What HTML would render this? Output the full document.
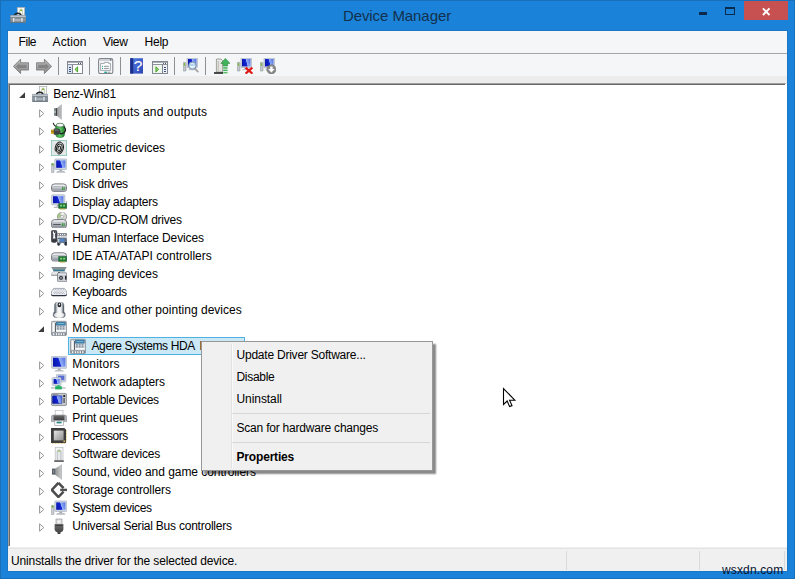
<!DOCTYPE html>
<html><head><meta charset="utf-8"><title>Device Manager</title>
<style>
html,body{margin:0;padding:0}
body{width:795px;height:579px;overflow:hidden;position:relative;background:#1a83d9;font-family:"Liberation Sans",sans-serif;font-size:12px;color:#000}
.abs{position:absolute}
.t{position:absolute;white-space:nowrap;line-height:14px;height:14px}
#frame{left:0;top:0;width:793px;height:577px;border:1px solid #1a70b8}
#title{left:0;top:6.7px;width:794px;text-align:center;font-size:15px;color:#14304c;line-height:18px;letter-spacing:-.07px}
#client{left:8px;top:31px;width:779px;height:540px;background:#f0f0f0}
#menubar{left:8px;top:31px;width:779px;height:22px;background:#f5f6f7}
#menuline{left:8px;top:53px;width:779px;height:1px;background:#a6a6a6}
#toolbar{left:8px;top:54px;width:779px;height:22px;background:#f5f6f7}
#gap{left:8px;top:76px;width:779px;height:7px;background:#ececec}
.tsep{position:absolute;top:57px;width:1px;height:18px;background:#8f8f8f}
#tree{left:8px;top:83px;width:775px;height:461px;background:#fff;border-left:1px solid #a0a0a0;border-top:1px solid #a0a0a0;border-right:2px solid #fff;border-bottom:1px solid #fff;box-shadow:inset 1px 1px 0 #696969;padding:1px 0 0 1px}
#sel{left:68px;top:337px;width:175px;height:16px;background:#cbe8f6;border:1px solid #4fb0e2}
#status{left:8px;top:548px;width:779px;height:23px;background:#f0f0f0;border-top:1px solid #e3e3e3;box-sizing:border-box}
.ssep{position:absolute;top:551px;width:1px;height:19px;background:#dadada}
#menu{left:201px;top:341px;width:230px;height:128px;border:1px solid #979797;background:#f0f0f0;box-shadow:3px 3px 1.6px rgba(0,0,0,.46)}
#gutter{left:231px;top:344px;width:1px;height:124px;background:#e2e2e2;border-right:1px solid #fafafa}
.sp{position:absolute;left:232px;width:198px;height:1px;background:#d7d7d7}
</style></head><body>

<svg width="0" height="0" style="position:absolute"><defs>
<linearGradient id="gScr" x1="0" y1=".25" x2="1" y2="0"><stop offset="0" stop-color="#0a18b0"/><stop offset=".42" stop-color="#1226d4"/><stop offset=".5" stop-color="#93aef4"/><stop offset="1" stop-color="#4a6ce4"/></linearGradient>
<linearGradient id="gGrayV" x1="0" y1="0" x2="0" y2="1"><stop offset="0" stop-color="#d9dde1"/><stop offset="1" stop-color="#8b939b"/></linearGradient>
<linearGradient id="gGrayH" x1="0" y1="0" x2="1" y2="0"><stop offset="0" stop-color="#929292"/><stop offset="1" stop-color="#cfcfcf"/></linearGradient>
<linearGradient id="gBox" x1="0" y1="0" x2="0" y2="1"><stop offset="0" stop-color="#aab3bb"/><stop offset="1" stop-color="#78838c"/></linearGradient>
<linearGradient id="gGreen" x1="0" y1="0" x2="1" y2="0"><stop offset="0" stop-color="#2f9a3a"/><stop offset=".5" stop-color="#5fd06a"/><stop offset="1" stop-color="#1f7a2a"/></linearGradient>
<linearGradient id="gDark" x1="0" y1="0" x2="0" y2="1"><stop offset="0" stop-color="#6a6a6a"/><stop offset="1" stop-color="#3c3c3c"/></linearGradient>
<linearGradient id="gChip" x1="0" y1="0" x2="1" y2="1"><stop offset="0" stop-color="#e6e6e6"/><stop offset="1" stop-color="#8e8e8e"/></linearGradient>
<linearGradient id="gMouse" x1="0" y1="0" x2="1" y2="0"><stop offset="0" stop-color="#6a727e"/><stop offset=".14" stop-color="#4e5662"/><stop offset=".36" stop-color="#e4e7ea"/><stop offset=".5" stop-color="#ffffff"/><stop offset=".68" stop-color="#dcdfe3"/><stop offset=".86" stop-color="#4e5662"/><stop offset="1" stop-color="#7a828e"/></linearGradient>
<linearGradient id="gLid" x1="0" y1="0" x2="0" y2="1"><stop offset="0" stop-color="#7f898c"/><stop offset=".45" stop-color="#8f9a9c"/><stop offset=".75" stop-color="#2f7f98"/><stop offset="1" stop-color="#1f5f78"/></linearGradient>
<linearGradient id="gArrow" x1="0" y1="0" x2="0" y2="1"><stop offset="0" stop-color="#b9b9b9"/><stop offset="1" stop-color="#8f8f8f"/></linearGradient>
<linearGradient id="gHelp" x1="0" y1="0" x2="1" y2="1"><stop offset="0" stop-color="#5580e4"/><stop offset="1" stop-color="#2a44b4"/></linearGradient>
</defs></svg>

<div id="frame" class="abs"></div><div class="abs" style="left:7px;top:30px;width:779px;height:540px;border:1px solid #1b76c6"></div>
<svg class="abs" style="left:10px;top:7px" width="16" height="16" viewBox="0 0 16 16" ><rect x="7.3" y=".4" width="7.4" height="8.6" fill="#fdfdfd" stroke="#a4aaae" stroke-width=".7"/><path d="M9.6 8.6 V3.6 Q9.6 2 11.1 2 Q12.6 2 12.6 3.6 V8.6" fill="#f1f4ea" stroke="#a9b49a" stroke-width=".6"/><path d="M9.9 3.9 Q9.9 2.3 11.1 2.3 Q12.3 2.3 12.3 3.9 Z" fill="#8fb33a"/><path d="M4.3 8.6 Q5 6.2 7.8 6.2 Q10.6 6.2 11.3 8.6" fill="none" stroke="#1f2326" stroke-width="1.4"/><rect x=".3" y="8.3" width="15.6" height="7.5" rx=".5" fill="url(#gBox)" stroke="#6c7781" stroke-width=".5"/><rect x=".6" y="8.7" width="15" height="1.7" fill="#bcc5cd"/><rect x=".6" y="10.5" width="15" height=".8" fill="#5a6670"/><rect x="2.9" y="11" width="1.5" height="4" fill="#dfe4e8"/><rect x="11.2" y="11" width="1.5" height="4" fill="#dfe4e8"/><rect x="5.2" y="12" width="5.4" height="2.4" fill="#a9b3bc"/><rect x=".6" y="14.8" width="15" height=".8" fill="#66717b"/></svg>
<div id="title" class="abs">Device Manager</div>
<div class="abs" style="left:699px;top:12px;width:8px;height:3px;background:#0c2a4a"></div>
<div class="abs" style="left:725px;top:7px;width:8px;height:5px;border:1px solid #0c2a4a;border-top-width:2px"></div>
<div class="abs" style="left:744px;top:1px;width:44px;height:19px;background:#c75050"></div>
<svg class="abs" style="left:760px;top:5px" width="12" height="12" viewBox="0 0 12 12" ><path d="M2.9 3.4 L9.5 10 M9.5 3.4 L2.9 10" stroke="#fff" stroke-width="1.9"/></svg>
<div id="client" class="abs"></div><div id="menubar" class="abs"></div><div id="menuline" class="abs"></div><div id="toolbar" class="abs"></div><div id="gap" class="abs"></div>
<div class="t" style="left:18.6px;top:35px;letter-spacing:-0.461px">File</div>
<div class="t" style="left:52.6px;top:35px;letter-spacing:0.107px">Action</div>
<div class="t" style="left:103px;top:35px;letter-spacing:-0.324px">View</div>
<div class="t" style="left:144.5px;top:35px;letter-spacing:-0.222px">Help</div>
<svg class="abs" style="left:13px;top:58px" width="16" height="16" viewBox="0 0 16 16" ><path d="M.4 8.4 L7.6 1.2 V4.8 H15.6 V12 H7.6 V15.6 Z" fill="url(#gArrow)" stroke="#7c7c7c" stroke-width=".9" stroke-linejoin="round"/><path d="M3 8.4 L6.4 5 V6.8 H13.6 V10 H6.4 V11.8 Z" fill="#6f6f6f" opacity=".6"/></svg>
<svg class="abs" style="left:36px;top:58px" width="16" height="16" viewBox="0 0 16 16" ><g transform="translate(16,0) scale(-1,1)"><path d="M.4 8.4 L7.6 1.2 V4.8 H15.6 V12 H7.6 V15.6 Z" fill="url(#gArrow)" stroke="#7c7c7c" stroke-width=".9" stroke-linejoin="round"/><path d="M3 8.4 L6.4 5 V6.8 H13.6 V10 H6.4 V11.8 Z" fill="#6f6f6f" opacity=".6"/></g></svg>
<svg class="abs" style="left:67px;top:58px" width="16" height="16" viewBox="0 0 16 16" ><rect x=".5" y="3.5" width="15" height="12" fill="#fff" stroke="#828892" stroke-width="1"/><rect x="1" y="4" width="14" height="1" fill="#a9aeb6"/><rect x="11" y="5" width="1" height="1" fill="#4f555e"/><rect x="13" y="5" width="1" height="1" fill="#4f555e"/><rect x="1" y="6" width="14" height="1" fill="#8d939c"/><rect x="1" y="7" width="4" height="8" fill="#dde5f2"/><rect x="5" y="7" width="1" height="8" fill="#7d838c"/><g fill="#3a4c78"><rect x="2" y="9" width="2" height="1"/><rect x="2" y="11" width="2" height="1"/><rect x="2" y="13" width="2" height="1"/></g><polygon points="7.9,11.4 10.6,8.8 10.6,14" fill="#9ad47c" stroke="#3f9e22" stroke-width=".9"/></svg>
<svg class="abs" style="left:98px;top:58px" width="16" height="16" viewBox="0 0 16 16" ><rect x=".6" y=".6" width="14.2" height="15" rx="1.8" fill="#f6f7f8" stroke="#80858c" stroke-width="1.1"/><rect x="1.6" y="1.7" width="12.2" height=".9" fill="#b4b9c0"/><rect x="12" y="1.2" width="1.3" height="1.3" fill="#555a60"/><path d="M2.6 5.4 H6.4 V4.4 H10.6 V5.4 H12.4 V12.4 H2.6 Z" fill="#fff" stroke="#8d939b" stroke-width=".8"/><g fill="#2fa398"><rect x="4" y="7.8" width="1.1" height="1.1"/><rect x="4" y="9.9" width="1.1" height="1.1"/></g><g fill="#8d939b"><rect x="6" y="7.8" width="4.8" height="1"/><rect x="6" y="9.9" width="4.8" height="1"/></g><rect x="6.2" y="13.6" width="2.8" height="1.4" fill="#2fa89a"/><rect x="9.6" y="13.6" width="2.8" height="1.4" fill="#a9aeb5"/></svg>
<svg class="abs" style="left:130px;top:58px" width="16" height="16" viewBox="0 0 16 16" ><rect x=".2" y=".2" width="12.8" height="15.4" fill="url(#gHelp)"/><rect x=".2" y=".2" width="3" height="15.4" fill="#1c2f8a"/><text x="8" y="13.4" font-family="Liberation Sans,sans-serif" font-size="15.5" fill="#fff" stroke="#fff" stroke-width=".1" text-anchor="middle">?</text></svg>
<svg class="abs" style="left:152px;top:58px" width="16" height="16" viewBox="0 0 16 16" ><rect x=".5" y="3.5" width="15" height="12" fill="#fff" stroke="#828892" stroke-width="1"/><rect x="1" y="4" width="14" height="1" fill="#a9aeb6"/><rect x="11" y="5" width="1" height="1" fill="#4f555e"/><rect x="13" y="5" width="1" height="1" fill="#4f555e"/><rect x="1" y="6" width="14" height="1" fill="#8d939c"/><rect x="11" y="7" width="4" height="8" fill="#f0f2f6"/><rect x="10" y="7" width="1" height="8" fill="#7d838c"/><g fill="#3a4c78"><rect x="12" y="9" width="2" height="1"/><rect x="12" y="11" width="2" height="1"/><rect x="12" y="13" width="2" height="1"/></g><rect x="1" y="7" width="9" height="8" fill="#eef5ea"/><polygon points="6.6,11.4 3.9,8.8 3.9,14" fill="#9ad47c" stroke="#3f9e22" stroke-width=".9"/></svg>
<svg class="abs" style="left:183px;top:58px" width="16" height="16" viewBox="0 0 16 16" ><g transform="translate(0,0)"><rect x="4" y="0" width="10.4" height="9.6" rx=".6" fill="#cfd6e2" stroke="#9aa4b6" stroke-width=".6"/><rect x="5" y="1" width="8.4" height="7.4" fill="url(#gScr)"/><rect x="7.4" y="9.6" width="3.6" height="1.6" fill="#b4bac4"/><rect x="5.6" y="11" width="7" height="1.2" fill="#c0c5cc"/><rect x="0" y="4.4" width="3" height="8.6" rx=".6" fill="#c3c7cc" stroke="#83888e" stroke-width=".5"/><rect x=".7" y="5.2" width="1.4" height="2.6" fill="#7cbf3a"/></g><line x1="12" y1="10.6" x2="14.8" y2="13.6" stroke="#a2a2a2" stroke-width="1.7" stroke-linecap="round"/><circle cx="9.4" cy="7.6" r="3.7" fill="#b9dcf4" fill-opacity=".92" stroke="#7f93ac" stroke-width="1"/><path d="M7.2 8.2 Q9.2 10.2 11.4 7.8" stroke="#fff" stroke-width="1.1" fill="none"/><path d="M7.4 6.2 Q9 4.8 11 5.8" stroke="#e8f4fc" stroke-width=".8" fill="none"/></svg>
<svg class="abs" style="left:214px;top:58px" width="16" height="16" viewBox="0 0 16 16" ><path d="M2.4 1 H7 L8.6 2.6 V14 H2.4 Z" fill="#e6e7e4" stroke="#8d9088" stroke-width=".8"/><rect x="3.6" y="3" width="1.4" height="10" fill="#c4c6bf"/><rect x="0" y="14.2" width="9" height="1.6" fill="#222"/><polygon points="11.4,.4 16,5.4 13.6,5.4 13.6,8 9.2,8 9.2,5.4 6.8,5.4" fill="#3fb45c" stroke="#2a8a3e" stroke-width=".6"/><rect x="9.2" y="9.2" width="4.4" height="1.5" fill="#3fb45c"/><rect x="9.2" y="11.6" width="4.4" height="1.5" fill="#3fb45c"/><rect x="9.2" y="14" width="4.4" height="1.4" fill="#5cc06a"/></svg>
<svg class="abs" style="left:237px;top:58px" width="16" height="16" viewBox="0 0 16 16" ><g transform="translate(0,0)"><rect x="4" y="0" width="10.4" height="9.6" rx=".6" fill="#cfd6e2" stroke="#9aa4b6" stroke-width=".6"/><rect x="5" y="1" width="8.4" height="7.4" fill="url(#gScr)"/><rect x="7.4" y="9.6" width="3.6" height="1.6" fill="#b4bac4"/><rect x="5.6" y="11" width="7" height="1.2" fill="#c0c5cc"/><rect x="0" y="4.4" width="3" height="8.6" rx=".6" fill="#c3c7cc" stroke="#83888e" stroke-width=".5"/><rect x=".7" y="5.2" width="1.4" height="2.6" fill="#7cbf3a"/></g><path d="M8.6 9.6 L15.4 15.6 M15.4 9.6 L8.6 15.6" stroke="#e01818" stroke-width="2.2"/></svg>
<svg class="abs" style="left:260px;top:58px" width="16" height="16" viewBox="0 0 16 16" ><g transform="translate(0,0)"><rect x="4" y="0" width="10.4" height="9.6" rx=".6" fill="#cfd6e2" stroke="#9aa4b6" stroke-width=".6"/><rect x="5" y="1" width="8.4" height="7.4" fill="url(#gScr)"/><rect x="7.4" y="9.6" width="3.6" height="1.6" fill="#b4bac4"/><rect x="5.6" y="11" width="7" height="1.2" fill="#c0c5cc"/><rect x="0" y="4.4" width="3" height="8.6" rx=".6" fill="#c3c7cc" stroke="#83888e" stroke-width=".5"/><rect x=".7" y="5.2" width="1.4" height="2.6" fill="#7cbf3a"/></g><circle cx="11.4" cy="11.4" r="4.6" fill="#8a8a8a" stroke="#6a6a6a" stroke-width=".5"/><path d="M10.2 8.4 H12.6 V11 H14.6 L11.4 14.6 L8.2 11 H10.2 Z" fill="#fff"/></svg>
<div class="tsep" style="left:58px"></div>
<div class="tsep" style="left:89px"></div>
<div class="tsep" style="left:120px"></div>
<div class="tsep" style="left:174px"></div>
<div class="tsep" style="left:205px"></div>
<div id="tree" class="abs"></div>
<div id="sel" class="abs"></div>
<svg class="abs" style="left:19px;top:92px" width="7" height="7" viewBox="0 0 7 7" ><polygon points="6,0.2 6,6 0.2,6" fill="#3c3c3c"/></svg>
<svg class="abs" style="left:32px;top:86px" width="16" height="16" viewBox="0 0 16 16" ><rect x="7.3" y=".4" width="7.4" height="8.6" fill="#fdfdfd" stroke="#a4aaae" stroke-width=".7"/><path d="M9.6 8.6 V3.6 Q9.6 2 11.1 2 Q12.6 2 12.6 3.6 V8.6" fill="#f1f4ea" stroke="#a9b49a" stroke-width=".6"/><path d="M9.9 3.9 Q9.9 2.3 11.1 2.3 Q12.3 2.3 12.3 3.9 Z" fill="#8fb33a"/><path d="M4.3 8.6 Q5 6.2 7.8 6.2 Q10.6 6.2 11.3 8.6" fill="none" stroke="#1f2326" stroke-width="1.4"/><rect x=".3" y="8.3" width="15.6" height="7.5" rx=".5" fill="url(#gBox)" stroke="#6c7781" stroke-width=".5"/><rect x=".6" y="8.7" width="15" height="1.7" fill="#bcc5cd"/><rect x=".6" y="10.5" width="15" height=".8" fill="#5a6670"/><rect x="2.9" y="11" width="1.5" height="4" fill="#dfe4e8"/><rect x="11.2" y="11" width="1.5" height="4" fill="#dfe4e8"/><rect x="5.2" y="12" width="5.4" height="2.4" fill="#a9b3bc"/><rect x=".6" y="14.8" width="15" height=".8" fill="#66717b"/></svg>
<div class="t" style="left:53.3px;top:87px;letter-spacing:-0.277px">Benz-Win81</div>
<svg class="abs" style="left:39px;top:109px" width="6" height="9" viewBox="0 0 6 9" ><polygon points="0.6,0.8 4.8,4.5 0.6,8.2" fill="#fff" stroke="#979797" stroke-width="1"/></svg>
<svg class="abs" style="left:51px;top:104px" width="16" height="16" viewBox="0 0 16 16" ><polygon points="5.8,4.2 10.9,0 10.9,16 5.8,11.8" fill="url(#gGrayH)"/><polygon points="9.9,0.9 10.2,.6 10.2,15.4 9.9,15.1" fill="#7d8288"/><polygon points="10.3,.5 10.9,0 10.9,16 10.3,15.5" fill="#c4c9d2"/><rect x="3" y="4.2" width="2.9" height="7.6" fill="#7c8486"/><rect x="4.9" y="4.2" width="1" height="7.6" fill="#33373b"/><rect x="3.4" y="6.6" width="1.2" height="2.4" fill="#c8d0d2"/></svg>
<div class="t" style="left:72.3px;top:105px;letter-spacing:0.108px">Audio inputs and outputs</div>
<svg class="abs" style="left:39px;top:127px" width="6" height="9" viewBox="0 0 6 9" ><polygon points="0.6,0.8 4.8,4.5 0.6,8.2" fill="#fff" stroke="#979797" stroke-width="1"/></svg>
<svg class="abs" style="left:51px;top:122px" width="16" height="16" viewBox="0 0 16 16" ><path d="M2.2 .8 Q3.4 4.6 6.4 4.4" fill="none" stroke="#1e1e1e" stroke-width="1.1"/><rect x="4.6" y="1.6" width="9" height="13.8" rx="3.4" fill="url(#gGreen)" stroke="#1c6a28" stroke-width=".5"/><ellipse cx="9.1" cy="3.1" rx="3.7" ry="1.9" fill="#f4f8f4" stroke="#4a5a4e" stroke-width=".6"/><path d="M13 4.6 Q16 8 13 10.8 Q10.4 12.6 8.4 11" fill="none" stroke="#1e1e1e" stroke-width="1.3"/><rect x="-.2" y="7.6" width="3.4" height="4.2" fill="#c9a21e"/><rect x="-.2" y="9.4" width="3.4" height=".6" fill="#8a6a10"/><path d="M2.8 6.6 H6.4 Q9.6 7 9.6 9.7 Q9.6 12.4 6.4 12.8 H2.8 Z" fill="#3f4144"/><path d="M3.4 7.4 H6.2 Q8 7.6 8.4 8.8 H3.4 Z" fill="#6a6d70"/></svg>
<div class="t" style="left:72.3px;top:123px;letter-spacing:-0.318px">Batteries</div>
<svg class="abs" style="left:39px;top:145px" width="6" height="9" viewBox="0 0 6 9" ><polygon points="0.6,0.8 4.8,4.5 0.6,8.2" fill="#fff" stroke="#979797" stroke-width="1"/></svg>
<svg class="abs" style="left:51px;top:140px" width="16" height="16" viewBox="0 0 16 16" ><rect x=".4" y=".4" width="15.2" height="15.2" fill="#e4e8e7" stroke="#8cc6be" stroke-width=".9"/><g fill="none" stroke="#1c1c1c" stroke-width="1" transform="rotate(14 8.3 8)"><ellipse cx="8.3" cy="8" rx="4.1" ry="6"/><ellipse cx="8.3" cy="8.2" rx="2.7" ry="4.2"/><ellipse cx="8.3" cy="8.4" rx="1.3" ry="2.3"/></g><path d="M3 11 L6.4 14.6" stroke="#e4e8e7" stroke-width="1.8"/><path d="M10.6 1.6 L13 3.6" stroke="#e4e8e7" stroke-width="1.2"/></svg>
<div class="t" style="left:72.3px;top:141px;letter-spacing:-0.078px">Biometric devices</div>
<svg class="abs" style="left:39px;top:163px" width="6" height="9" viewBox="0 0 6 9" ><polygon points="0.6,0.8 4.8,4.5 0.6,8.2" fill="#fff" stroke="#979797" stroke-width="1"/></svg>
<svg class="abs" style="left:51px;top:158px" width="16" height="16" viewBox="0 0 16 16" ><rect x="3.8" y="1" width="12" height="10.4" rx=".9" fill="#d3dae6" stroke="#a3adbf" stroke-width=".7"/><rect x="5.199999999999999" y="2.4" width="9.2" height="7.4" fill="url(#gScr)"/><rect x="8.4" y="11.6" width="2.8" height="1.6" fill="#a4aab2"/><path d="M6.200000000000001 13.0 H13.4 L14.600000000000001 14.7 H5.000000000000001 Z" fill="#b9bdc3"/><rect x=".2" y="5.6" width="2.8" height="9" rx=".6" fill="#c9ccd0" stroke="#8e9398" stroke-width=".5"/><rect x=".7" y="5.2" width="1.8" height="2.4" rx=".6" fill="#6cb23a"/></svg>
<div class="t" style="left:72.3px;top:159px;letter-spacing:0.127px">Computer</div>
<svg class="abs" style="left:39px;top:181px" width="6" height="9" viewBox="0 0 6 9" ><polygon points="0.6,0.8 4.8,4.5 0.6,8.2" fill="#fff" stroke="#979797" stroke-width="1"/></svg>
<svg class="abs" style="left:51px;top:176px" width="16" height="16" viewBox="0 0 16 16" ><path d="M.5 10.9 Q.5 7.9 3.6 7.9 H12.4 Q15.5 7.9 15.5 10.9 V13.4 Q15.5 15.4 13.4 15.4 H2.6 Q.5 15.4 .5 13.4 Z" fill="#eceef0" stroke="#6c7178" stroke-width=".9"/><rect x="1.2" y="10.5" width="13.6" height="4.1000000000000005" rx="1.5" fill="url(#gGrayV)" stroke="#8a8f96" stroke-width=".5"/><rect x="11" y="11" width="1.1" height="3" fill="#3d9a3d"/><rect x="12.6" y="11" width="1.1" height="3" fill="#3d9a3d"/></svg>
<div class="t" style="left:72.3px;top:177px;letter-spacing:-0.29px">Disk drives</div>
<svg class="abs" style="left:39px;top:199px" width="6" height="9" viewBox="0 0 6 9" ><polygon points="0.6,0.8 4.8,4.5 0.6,8.2" fill="#fff" stroke="#979797" stroke-width="1"/></svg>
<svg class="abs" style="left:51px;top:194px" width="16" height="16" viewBox="0 0 16 16" ><rect x="0.6" y="0.8" width="13.2" height="10" rx=".9" fill="#d3dae6" stroke="#a3adbf" stroke-width=".7"/><rect x="2.0" y="2.2" width="10.399999999999999" height="7" fill="url(#gScr)"/><rect x="5.799999999999999" y="11.0" width="2.8" height="1.6" fill="#a4aab2"/><path d="M3.599999999999999 12.4 H10.799999999999999 L12.0 14.100000000000001 H2.3999999999999995 Z" fill="#b9bdc3"/><rect x="15.2" y="7.0" width=".9" height="8" fill="#9aa0a0"/><rect x="7.8" y="9.6" width="7.6" height="4.8" fill="#1c7a38" stroke="#0e4a1e" stroke-width=".5"/><rect x="9.1" y="10.799999999999999" width="2" height="1.7" fill="#8fd07a"/><rect x="12.1" y="10.799999999999999" width="2" height="1.7" fill="#8fd07a"/><rect x="8.8" y="14.5" width="5.6" height="1" fill="#b8a838"/></svg>
<div class="t" style="left:72.3px;top:195px;letter-spacing:-0.243px">Display adapters</div>
<svg class="abs" style="left:39px;top:217px" width="6" height="9" viewBox="0 0 6 9" ><polygon points="0.6,0.8 4.8,4.5 0.6,8.2" fill="#fff" stroke="#979797" stroke-width="1"/></svg>
<svg class="abs" style="left:51px;top:212px" width="16" height="16" viewBox="0 0 16 16" ><circle cx="11" cy="4.8" r="4.6" fill="#d2d4d0" stroke="#8a8e8a" stroke-width=".8"/><path d="M11 4.8 L6.6 6.2 A4.6 4.6 0 0 1 8.6 .9 Z" fill="#9cc078" opacity=".8"/><path d="M11 4.8 L10.2 .4 A4.6 4.6 0 0 1 13.6 1 Z" fill="#f8f8f8" opacity=".9"/><circle cx="11" cy="4.8" r="1.5" fill="#f4f4f4" stroke="#9aa09a" stroke-width=".6"/><path d="M.5 10.6 Q.5 7.6000000000000005 3.6 7.6000000000000005 H12.4 Q15.5 7.6000000000000005 15.5 10.6 V13.8 Q15.5 15.8 13.4 15.8 H2.6 Q.5 15.8 .5 13.8 Z" fill="#eceef0" stroke="#6c7178" stroke-width=".9"/><rect x="1.2" y="10.2" width="13.6" height="4.8" rx="1.5" fill="url(#gGrayV)" stroke="#8a8f96" stroke-width=".5"/><rect x="2.2" y="11.9" width="7.6" height="1" fill="#4a4e54"/><rect x="10.8" y="11.2" width="1.2" height="2.8" fill="#3d9a3d"/><rect x="12.5" y="11.2" width="1.2" height="2.8" fill="#3d9a3d"/></svg>
<div class="t" style="left:72.3px;top:213px;letter-spacing:-0.226px">DVD/CD-ROM drives</div>
<svg class="abs" style="left:39px;top:235px" width="6" height="9" viewBox="0 0 6 9" ><polygon points="0.6,0.8 4.8,4.5 0.6,8.2" fill="#fff" stroke="#979797" stroke-width="1"/></svg>
<svg class="abs" style="left:51px;top:230px" width="16" height="16" viewBox="0 0 16 16" ><rect x=".2" y=".2" width="5.8" height="12.2" rx="1.8" fill="#4a4e56" stroke="#2e3238" stroke-width=".5"/><path d="M1.9 1.6 H4.4 V3 Q3.6 4.4 4 6 L4.4 8.6 H1.9 L2.3 6 Q2.6 4.4 1.9 3 Z" fill="#f4f6f8"/><rect x="3" y="1.2" width="1.4" height="1.6" fill="#2e3238"/><rect x="1" y="9.6" width="4.2" height="2.2" rx=".8" fill="#33363c"/><rect x="6.2" y="3.2" width="9.6" height="2.6" fill="#6a6e78"/><g fill="#f4f5f7"><rect x="6.8" y="4" width="1.2" height="1.1"/><rect x="8.9" y="4" width="1.2" height="1.1"/><rect x="11" y="4" width="1.2" height="1.1"/><rect x="13.1" y="4" width="1.2" height="1.1"/></g><rect x="6.2" y="5.8" width="9.6" height="2.6" fill="#c4c9d0"/><g fill="#f4f5f7"><rect x="7" y="6.4" width="1.2" height="1.1"/><rect x="9.1" y="6.4" width="1.2" height="1.1"/><rect x="11.2" y="6.4" width="1.2" height="1.1"/><rect x="13.3" y="6.4" width="1.2" height="1.1"/></g><path d="M7 8.2 H15.2 Q16.3 11.4 15.8 15 Q14.8 16.4 13.6 14.8 L12.8 12.6 H9.6 L8.8 14.8 Q7.6 16.4 6.6 15 Q6 11.4 7 8.2 Z" fill="#5f6f86" stroke="#3a4048" stroke-width=".5"/><rect x="8.8" y="8.8" width="4.6" height="3" fill="#4f84c8"/><rect x="6.8" y="9" width="1.6" height="3.4" fill="#c8d2d8"/><rect x="14" y="12" width="1.6" height="3" fill="#2c3038"/><rect x="6.8" y="13" width="1.6" height="2.2" fill="#2c3038"/></svg>
<div class="t" style="left:72.3px;top:231px;letter-spacing:-0.141px">Human Interface Devices</div>
<svg class="abs" style="left:39px;top:253px" width="6" height="9" viewBox="0 0 6 9" ><polygon points="0.6,0.8 4.8,4.5 0.6,8.2" fill="#fff" stroke="#979797" stroke-width="1"/></svg>
<svg class="abs" style="left:51px;top:248px" width="16" height="16" viewBox="0 0 16 16" ><path d="M.5 7.800000000000001 Q.5 4.800000000000001 3.6 4.800000000000001 H12.4 Q15.5 4.800000000000001 15.5 7.800000000000001 V11.0 Q15.5 13.0 13.4 13.0 H2.6 Q.5 13.0 .5 11.0 Z" fill="#eceef0" stroke="#6c7178" stroke-width=".9"/><rect x="1.2" y="7.4" width="13.6" height="4.8" rx="1.5" fill="url(#gGrayV)" stroke="#8a8f96" stroke-width=".5"/><rect x="15.2" y="6.0" width=".9" height="8" fill="#9aa0a0"/><rect x="7.8" y="8.6" width="7.6" height="4.8" fill="#1c7a38" stroke="#0e4a1e" stroke-width=".5"/><rect x="9.1" y="9.799999999999999" width="2" height="1.7" fill="#8fd07a"/><rect x="12.1" y="9.799999999999999" width="2" height="1.7" fill="#8fd07a"/><rect x="8.8" y="13.5" width="5.6" height="1" fill="#b8a838"/></svg>
<div class="t" style="left:72.3px;top:249px;letter-spacing:0.014px">IDE ATA/ATAPI controllers</div>
<svg class="abs" style="left:39px;top:271px" width="6" height="9" viewBox="0 0 6 9" ><polygon points="0.6,0.8 4.8,4.5 0.6,8.2" fill="#fff" stroke="#979797" stroke-width="1"/></svg>
<svg class="abs" style="left:51px;top:266px" width="16" height="16" viewBox="0 0 16 16" ><polygon points="0.2,1 15.8,1 13.2,5.4 2.8,5.4" fill="url(#gLid)"/><polygon points="2.8,5.4 13.2,5.4 15.6,7 15.6,9.5 .4,9.5 .4,7.2" fill="#e6e8ea" stroke="#a2a6aa" stroke-width=".5"/><rect x=".4" y="8.7" width="8" height=".9" fill="#8c8e90"/><rect x="7" y="6.2" width="2" height=".7" fill="#2a2c2e"/><rect x="6.5" y="6.9" width="9.3" height="8.9" rx="1.1" fill="#c9cdd5" stroke="#6a6e76" stroke-width=".7"/><rect x="7.2" y="7.5" width="7.9" height="1.3" fill="#e6e8ec"/><circle cx="10" cy="11.9" r="2.3" fill="#23262b" stroke="#eef0f2" stroke-width=".6"/><circle cx="10" cy="11.9" r=".9" fill="#aeb6c2"/><rect x="14" y="9.8" width="1.5" height="3.8" fill="#26282c"/></svg>
<div class="t" style="left:72.3px;top:267px;letter-spacing:-0.081px">Imaging devices</div>
<svg class="abs" style="left:39px;top:289px" width="6" height="9" viewBox="0 0 6 9" ><polygon points="0.6,0.8 4.8,4.5 0.6,8.2" fill="#fff" stroke="#979797" stroke-width="1"/></svg>
<svg class="abs" style="left:51px;top:284px" width="16" height="16" viewBox="0 0 16 16" ><path d="M2.6 4.4 H13.4 Q15.8 6.6 15.8 10 Q15.8 11.4 14.6 11.4 H1.4 Q.2 11.4 .2 10 Q.2 6.6 2.6 4.4 Z" fill="#f3f4f7" stroke="#858a96" stroke-width=".7"/><path d="M.6 10.4 Q.6 11.6 1.8 11.6 H14.2 Q15.4 11.6 15.4 10.4" fill="none" stroke="#2d3340" stroke-width="1.1"/><g fill="#8a90a0"><rect x="2.4" y="5.4" width=".8" height=".7"/><rect x="4.0" y="5.4" width=".8" height=".7"/><rect x="5.6" y="5.4" width=".8" height=".7"/><rect x="7.200000000000001" y="5.4" width=".8" height=".7"/><rect x="8.8" y="5.4" width=".8" height=".7"/><rect x="10.4" y="5.4" width=".8" height=".7"/><rect x="12.000000000000002" y="5.4" width=".8" height=".7"/><rect x="3.2" y="6.7" width=".8" height=".7"/><rect x="4.8" y="6.7" width=".8" height=".7"/><rect x="6.3999999999999995" y="6.7" width=".8" height=".7"/><rect x="8.000000000000002" y="6.7" width=".8" height=".7"/><rect x="9.600000000000001" y="6.7" width=".8" height=".7"/><rect x="11.200000000000001" y="6.7" width=".8" height=".7"/><rect x="12.800000000000002" y="6.7" width=".8" height=".7"/><rect x="2.4" y="8.0" width=".8" height=".7"/><rect x="4.0" y="8.0" width=".8" height=".7"/><rect x="5.6" y="8.0" width=".8" height=".7"/><rect x="7.200000000000001" y="8.0" width=".8" height=".7"/><rect x="8.8" y="8.0" width=".8" height=".7"/><rect x="10.4" y="8.0" width=".8" height=".7"/><rect x="12.000000000000002" y="8.0" width=".8" height=".7"/><rect x="3.2" y="9.3" width=".8" height=".7"/><rect x="4.8" y="9.3" width=".8" height=".7"/><rect x="6.3999999999999995" y="9.3" width=".8" height=".7"/><rect x="8.000000000000002" y="9.3" width=".8" height=".7"/><rect x="9.600000000000001" y="9.3" width=".8" height=".7"/><rect x="11.200000000000001" y="9.3" width=".8" height=".7"/><rect x="12.800000000000002" y="9.3" width=".8" height=".7"/></g></svg>
<div class="t" style="left:72.3px;top:285px;letter-spacing:-0.319px">Keyboards</div>
<svg class="abs" style="left:39px;top:307px" width="6" height="9" viewBox="0 0 6 9" ><polygon points="0.6,0.8 4.8,4.5 0.6,8.2" fill="#fff" stroke="#979797" stroke-width="1"/></svg>
<svg class="abs" style="left:51px;top:302px" width="16" height="16" viewBox="0 0 16 16" ><path d="M4.4 .7 Q8.2 -.5 12 .7 Q13.2 2 13 5 V9.4 Q14.8 11.4 14.2 14 Q13.4 16 8.2 16 Q3 16 2.2 14 Q1.6 11.4 3.4 9.4 V5 Q3.2 2 4.4 .7 Z" fill="url(#gMouse)" stroke="#7a808a" stroke-width=".4"/><ellipse cx="8.2" cy="13" rx="5.2" ry="2.5" fill="#f6f6f6" opacity=".85"/><path d="M5.6 1 Q8.2 .2 10.8 1 Q11.2 3.4 10.4 5.4 Q8.4 4 6.2 5.4 Q5.2 3.4 5.6 1 Z" fill="#dfe2e6"/><ellipse cx="8.4" cy="2.9" rx="1.9" ry="2.3" fill="#20242a"/><rect x="7.8" y="1.5" width="1.3" height="1.8" rx=".5" fill="#f4f4f4"/></svg>
<div class="t" style="left:72.3px;top:303px;letter-spacing:0.023px">Mice and other pointing devices</div>
<svg class="abs" style="left:38px;top:326px" width="7" height="7" viewBox="0 0 7 7" ><polygon points="6,0.2 6,6 0.2,6" fill="#3c3c3c"/></svg>
<svg class="abs" style="left:51px;top:320px" width="16" height="16" viewBox="0 0 16 16" ><rect x=".4" y="1.3" width="15.2" height="14.2" rx="1.2" fill="#d6dadf" stroke="#7f868e" stroke-width=".8"/><rect x="1.1" y="2" width="2.9" height="10.4" rx="1" fill="#fafafa" stroke="#9aa0a6" stroke-width=".5"/><rect x="4.1" y="3" width=".7" height="9" fill="#30343a"/><rect x="5.6" y="2.2" width="8.6" height="2.9" fill="#3d8bb8" stroke="#2a5f86" stroke-width=".6"/><rect x="6.6" y="3" width="6.6" height=".8" fill="#7cc0e0"/><g fill="#5d6f86"><rect x="6" y="6.4" width="1.8" height="1"/><rect x="8.8" y="6.4" width="1.8" height="1"/><rect x="11.6" y="6.4" width="1.8" height="1"/><rect x="6" y="8.4" width="1.8" height="1"/><rect x="8.8" y="8.4" width="1.8" height="1"/><rect x="11.6" y="8.4" width="1.8" height="1"/></g><rect x="5.2" y="10.2" width="9.6" height="1.3" fill="#fff"/><rect x=".8" y="12.3" width="14.4" height="2.9" fill="#7c848d"/><rect x=".8" y="12.3" width="14.4" height=".8" fill="#a2a9b0"/><g fill="#f2f4f6"><rect x="4.8" y="13.2" width="1.4" height="2"/><rect x="7.2" y="13.2" width="1.4" height="2"/><rect x="9.6" y="13.2" width="1.4" height="2"/><rect x="12.1" y="13.2" width="1.4" height="2"/><rect x="1.8" y="13.2" width="1.6" height="2"/></g></svg>
<div class="t" style="left:72.3px;top:321px;letter-spacing:0.114px">Modems</div>
<svg class="abs" style="left:70px;top:338px" width="16" height="16" viewBox="0 0 16 16" ><rect x=".4" y="1.3" width="15.2" height="14.2" rx="1.2" fill="#d6dadf" stroke="#7f868e" stroke-width=".8"/><rect x="1.1" y="2" width="2.9" height="10.4" rx="1" fill="#fafafa" stroke="#9aa0a6" stroke-width=".5"/><rect x="4.1" y="3" width=".7" height="9" fill="#30343a"/><rect x="5.6" y="2.2" width="8.6" height="2.9" fill="#3d8bb8" stroke="#2a5f86" stroke-width=".6"/><rect x="6.6" y="3" width="6.6" height=".8" fill="#7cc0e0"/><g fill="#5d6f86"><rect x="6" y="6.4" width="1.8" height="1"/><rect x="8.8" y="6.4" width="1.8" height="1"/><rect x="11.6" y="6.4" width="1.8" height="1"/><rect x="6" y="8.4" width="1.8" height="1"/><rect x="8.8" y="8.4" width="1.8" height="1"/><rect x="11.6" y="8.4" width="1.8" height="1"/></g><rect x="5.2" y="10.2" width="9.6" height="1.3" fill="#fff"/><rect x=".8" y="12.3" width="14.4" height="2.9" fill="#7c848d"/><rect x=".8" y="12.3" width="14.4" height=".8" fill="#a2a9b0"/><g fill="#f2f4f6"><rect x="4.8" y="13.2" width="1.4" height="2"/><rect x="7.2" y="13.2" width="1.4" height="2"/><rect x="9.6" y="13.2" width="1.4" height="2"/><rect x="12.1" y="13.2" width="1.4" height="2"/><rect x="1.8" y="13.2" width="1.6" height="2"/></g></svg>
<div class="t" style="left:91.5px;top:339px;letter-spacing:-0.397px">Agere Systems HDA <span style="margin-left:2.5px">Modem</span></div>
<svg class="abs" style="left:39px;top:361px" width="6" height="9" viewBox="0 0 6 9" ><polygon points="0.6,0.8 4.8,4.5 0.6,8.2" fill="#fff" stroke="#979797" stroke-width="1"/></svg>
<svg class="abs" style="left:51px;top:356px" width="16" height="16" viewBox="0 0 16 16" ><rect x="0.6" y="0.3" width="15.2" height="12" rx=".9" fill="#d3dae6" stroke="#a3adbf" stroke-width=".7"/><rect x="2.0" y="1.7" width="12.399999999999999" height="9" fill="url(#gScr)"/><rect x="6.799999999999999" y="12.5" width="2.8" height="1.6" fill="#a4aab2"/><path d="M4.6 13.9 H11.799999999999999 L13.0 15.600000000000001 H3.3999999999999995 Z" fill="#b9bdc3"/></svg>
<div class="t" style="left:72.3px;top:357px;letter-spacing:0.186px">Monitors</div>
<svg class="abs" style="left:39px;top:379px" width="6" height="9" viewBox="0 0 6 9" ><polygon points="0.6,0.8 4.8,4.5 0.6,8.2" fill="#fff" stroke="#979797" stroke-width="1"/></svg>
<svg class="abs" style="left:51px;top:374px" width="16" height="16" viewBox="0 0 16 16" ><rect x="5.6" y="0.2" width="9.2" height="7.6" rx=".9" fill="#d3dae6" stroke="#a3adbf" stroke-width=".7"/><rect x="7.0" y="1.5999999999999999" width="6.3999999999999995" height="4.6" fill="#5a6cd0"/><rect x="1.2" y="3.6" width="8.8" height="7.8" rx=".9" fill="#d3dae6" stroke="#a3adbf" stroke-width=".7"/><rect x="2.5999999999999996" y="5.0" width="6.000000000000001" height="4.8" fill="url(#gScr)"/><rect x="0" y="13" width="14.6" height="1.8" fill="#c9cdd0"/><rect x="4.2" y="12.2" width="6.6" height="3.2" fill="#1fb060"/><rect x="6.4" y="11.2" width="2.2" height="1.6" fill="#1fb060"/></svg>
<div class="t" style="left:72.3px;top:375px;letter-spacing:-0.097px">Network adapters</div>
<svg class="abs" style="left:39px;top:397px" width="6" height="9" viewBox="0 0 6 9" ><polygon points="0.6,0.8 4.8,4.5 0.6,8.2" fill="#fff" stroke="#979797" stroke-width="1"/></svg>
<svg class="abs" style="left:51px;top:392px" width="16" height="16" viewBox="0 0 16 16" ><rect x=".3" y="1.4" width="15.4" height="12.2" rx="1.6" fill="#c5c9ce" stroke="#70767e" stroke-width=".7"/><rect x="1.4" y="3.8" width="9.6" height="7.8" rx=".6" fill="url(#gScr)" stroke="#10208a" stroke-width=".5"/><circle cx="13.2" cy="4" r="1.1" fill="#111"/><rect x="12.4" y="6" width="1.4" height="5" fill="#555"/><rect x="1.2" y="2.2" width="6" height=".8" fill="#888"/></svg>
<div class="t" style="left:72.3px;top:393px;letter-spacing:-0.264px">Portable Devices</div>
<svg class="abs" style="left:39px;top:415px" width="6" height="9" viewBox="0 0 6 9" ><polygon points="0.6,0.8 4.8,4.5 0.6,8.2" fill="#fff" stroke="#979797" stroke-width="1"/></svg>
<svg class="abs" style="left:51px;top:410px" width="16" height="16" viewBox="0 0 16 16" ><rect x="4.2" y=".4" width="7.8" height="5.2" fill="#fff" stroke="#a9adb2" stroke-width=".6"/><path d="M2.6 5 H13.4 Q15.8 5 15.8 7.4 V11.6 H.2 V7.4 Q.2 5 2.6 5 Z" fill="#aeb2b8" stroke="#7b8088" stroke-width=".5"/><rect x="2.6" y="5.4" width="10.8" height="4.8" fill="url(#gDark)"/><rect x="3.8" y="10.8" width="8.6" height="4.8" fill="#fff" stroke="#8d9298" stroke-width=".6"/><rect x="5.6" y="11.6" width="5" height="1.8" fill="#2a8a82"/></svg>
<div class="t" style="left:72.3px;top:411px;letter-spacing:-0.158px">Print queues</div>
<svg class="abs" style="left:39px;top:433px" width="6" height="9" viewBox="0 0 6 9" ><polygon points="0.6,0.8 4.8,4.5 0.6,8.2" fill="#fff" stroke="#979797" stroke-width="1"/></svg>
<svg class="abs" style="left:51px;top:428px" width="16" height="16" viewBox="0 0 16 16" ><rect x="0" y="0" width="15" height="15" fill="#3d3d3d"/><polygon points="13.4,0 15,0 15,1.6" fill="#fff"/><rect x="2.8" y="2.6" width="9.8" height="9.8" fill="url(#gChip)"/><rect x="12.4" y="12.4" width="1.8" height="1.8" fill="#c8b060"/><g fill="#d4b85a"><rect x="15" y="2.0" width=".8" height=".8"/><rect x="15" y="3.5" width=".8" height=".8"/><rect x="15" y="5.0" width=".8" height=".8"/><rect x="15" y="6.5" width=".8" height=".8"/><rect x="15" y="8.0" width=".8" height=".8"/><rect x="15" y="9.5" width=".8" height=".8"/><rect x="15" y="11.0" width=".8" height=".8"/><rect x="15" y="12.5" width=".8" height=".8"/><rect x="1.0" y="15" width=".8" height=".8"/><rect x="2.5" y="15" width=".8" height=".8"/><rect x="4.0" y="15" width=".8" height=".8"/><rect x="5.5" y="15" width=".8" height=".8"/><rect x="7.0" y="15" width=".8" height=".8"/><rect x="8.5" y="15" width=".8" height=".8"/><rect x="10.0" y="15" width=".8" height=".8"/><rect x="11.5" y="15" width=".8" height=".8"/><rect x="13.0" y="15" width=".8" height=".8"/></g></svg>
<div class="t" style="left:72.3px;top:429px;letter-spacing:-0.453px">Processors</div>
<svg class="abs" style="left:39px;top:451px" width="6" height="9" viewBox="0 0 6 9" ><polygon points="0.6,0.8 4.8,4.5 0.6,8.2" fill="#fff" stroke="#979797" stroke-width="1"/></svg>
<svg class="abs" style="left:51px;top:446px" width="16" height="16" viewBox="0 0 16 16" ><g transform="translate(0,.9)"><rect x="4.2" y=".4" width="7.8" height="13.2" fill="#f4f5f6" stroke="#b4b8be" stroke-width=".7"/><path d="M6.2 13.4 V5 Q6.2 3 8.1 3 Q10 3 10 5 V13.4" fill="#e6e9ea" stroke="#9ea4aa" stroke-width=".7"/><path d="M6.8 5 Q6.8 3.6 8.1 3.6 Q9.4 3.6 9.4 5" fill="#b6d68a" stroke="#8fb860" stroke-width=".5"/><rect x="3.2" y="13.6" width="9.6" height="1.2" fill="#2c2c2c"/></g></svg>
<div class="t" style="left:72.3px;top:447px;letter-spacing:-0.231px">Software devices</div>
<svg class="abs" style="left:39px;top:469px" width="6" height="9" viewBox="0 0 6 9" ><polygon points="0.6,0.8 4.8,4.5 0.6,8.2" fill="#fff" stroke="#979797" stroke-width="1"/></svg>
<svg class="abs" style="left:51px;top:464px" width="16" height="16" viewBox="0 0 16 16" ><polygon points="4,4.7 10.8,.2 10.8,15.8 4,10.8" fill="url(#gGrayH)"/><polygon points="10,.8 10.8,.2 10.8,15.8 10,15.2" fill="#b4bac2"/><rect x="1" y="4.6" width="3.2" height="6" fill="#565c64"/><rect x="2.2" y="6" width="1" height="3" fill="#8d97a8"/></svg>
<div class="t" style="left:72.3px;top:465px;letter-spacing:-0.053px">Sound, video and game controllers</div>
<svg class="abs" style="left:39px;top:487px" width="6" height="9" viewBox="0 0 6 9" ><polygon points="0.6,0.8 4.8,4.5 0.6,8.2" fill="#fff" stroke="#979797" stroke-width="1"/></svg>
<svg class="abs" style="left:51px;top:482px" width="16" height="16" viewBox="0 0 16 16" ><path d="M7.4 .8 L.8 7.9 L7.4 15 L12.6 9.6 M12.6 6.2 L7.4 .8" fill="none" stroke="#4c4c4c" stroke-width="2.5" stroke-linejoin="miter"/><rect x="9.2" y="6.7" width="6.8" height="2.4" fill="#505050"/></svg>
<div class="t" style="left:72.3px;top:483px;letter-spacing:-0.117px">Storage controllers</div>
<svg class="abs" style="left:39px;top:505px" width="6" height="9" viewBox="0 0 6 9" ><polygon points="0.6,0.8 4.8,4.5 0.6,8.2" fill="#fff" stroke="#979797" stroke-width="1"/></svg>
<svg class="abs" style="left:51px;top:500px" width="16" height="16" viewBox="0 0 16 16" ><rect x="3.8" y="1" width="12" height="10.4" rx=".9" fill="#d3dae6" stroke="#a3adbf" stroke-width=".7"/><rect x="5.199999999999999" y="2.4" width="9.2" height="7.4" fill="url(#gScr)"/><rect x="8.4" y="11.6" width="2.8" height="1.6" fill="#a4aab2"/><path d="M6.200000000000001 13.0 H13.4 L14.600000000000001 14.7 H5.000000000000001 Z" fill="#b9bdc3"/><rect x=".2" y="5.6" width="2.8" height="9" rx=".6" fill="#c9ccd0" stroke="#8e9398" stroke-width=".5"/><rect x=".7" y="5.2" width="1.8" height="2.4" rx=".6" fill="#6cb23a"/></svg>
<div class="t" style="left:72.3px;top:501px;letter-spacing:-0.324px">System devices</div>
<svg class="abs" style="left:39px;top:523px" width="6" height="9" viewBox="0 0 6 9" ><polygon points="0.6,0.8 4.8,4.5 0.6,8.2" fill="#fff" stroke="#979797" stroke-width="1"/></svg>
<svg class="abs" style="left:51px;top:518px" width="16" height="16" viewBox="0 0 16 16" ><rect x="5" y="1" width="6" height="5.6" fill="#d9dadc" stroke="#8e9094" stroke-width=".6"/><rect x="6.4" y="2.4" width="3.2" height="2.4" fill="#f4f4f4"/><path d="M3.6 6 H12.4 V11.4 Q12.4 13.6 9.4 14.4 V16.4 H6.6 V14.4 Q3.6 13.6 3.6 11.4 Z" fill="url(#gDark)"/><rect x="4.4" y="7.2" width="7.2" height=".8" fill="#333"/></svg>
<div class="t" style="left:72.3px;top:519px;letter-spacing:-0.226px">Universal Serial Bus controllers</div>
<div id="status" class="abs"></div>
<div class="ssep" style="left:566px"></div>
<div class="ssep" style="left:699px"></div>
<div class="ssep" style="left:784px"></div>
<div class="t" style="left:11px;top:553.5px;letter-spacing:-0.127px">Uninstalls the driver for the selected device.</div>
<div id="menu" class="abs"></div><div id="gutter" class="abs"></div>
<div class="t" style="left:236.5px;top:348px;letter-spacing:-0.225px">Update Driver Software...</div>
<div class="t" style="left:236.5px;top:370px;letter-spacing:-0.304px">Disable</div>
<div class="t" style="left:236.5px;top:392px;letter-spacing:-0.07px">Uninstall</div>
<div class="t" style="left:236.5px;top:421px;letter-spacing:-0.211px">Scan for hardware changes</div>
<div class="t" style="left:236.5px;top:450px;font-weight:bold;letter-spacing:-0.176px">Properties</div>
<div class="sp" style="top:413px"></div><div class="sp" style="top:442px"></div>
<svg class="abs" style="left:502px;top:387px" width="15" height="22" viewBox="0 0 15 22" ><path d="M1.5 1.5 V17.5 L5.2 14 L7.6 19.6 L10 18.6 L7.6 13.2 H12.8 Z" fill="#fff" stroke="#000" stroke-width="1.1" stroke-linejoin="miter"/></svg>
<div class="t" style="left:722px;top:562.6px;color:#0a1430;letter-spacing:.14px">wsxdn.com</div>
</body></html>
